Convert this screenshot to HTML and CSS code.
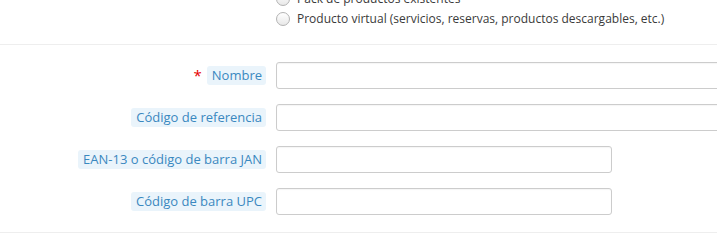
FILE: index.html
```html
<!DOCTYPE html>
<html lang="es">

<head>
    <meta charset="UTF-8" />
    <title>Producto</title>
    <link rel="stylesheet" href="styles.css">
</head>

<body>

    <div class="product-type">
        <label class="radio"><span class="radio-dot"></span>Pack de productos existentes</label>
        <label class="radio"><span class="radio-dot"></span>Producto virtual (servicios, reservas, productos descargables, etc.)</label>
    </div>

    <div class="form-block">
        <div class="form-row">
            <div class="label-col">
                <span class="required">*</span>
                <span class="label-tip">Nombre</span>
            </div>
            <input class="field wide" type="text">
        </div>
        <div class="form-row">
            <div class="label-col">
                <span class="label-tip">Código de referencia</span>
            </div>
            <input class="field wide" type="text">
        </div>
        <div class="form-row">
            <div class="label-col">
                <span class="label-tip">EAN-13 o código de barra JAN</span>
            </div>
            <input class="field" type="text">
        </div>
        <div class="form-row">
            <div class="label-col">
                <span class="label-tip">Código de barra UPC</span>
            </div>
            <input class="field" type="text">
        </div>
    </div>

</body>

</html>
```

FILE: styles.css
```css
body {
    margin: 0;
    background: #ffffff;
    font-family: 'Open Sans', sans-serif;
    font-size: 13px;
    color: #555;
    overflow: hidden;
}

.product-type {
    margin-top: -11px;
    padding-left: 276px;
    padding-bottom: 15px;
    border-bottom: 1px solid #eeeeee;
    font-size: 12px;
    color: #3a3a3a;
}

.radio {
    display: flex;
    align-items: center;
    height: 20px;
    line-height: 20px;
}

.radio-dot {
    width: 12px;
    height: 12px;
    border: 1px solid #b3b3b3;
    border-radius: 50%;
    background: linear-gradient(#ffffff, #e8e8e8);
    margin-right: 7px;
    flex-shrink: 0;
}

.form-block {
    padding: 17px 0 17px;
    border-bottom: 1px solid #eeeeee;
    display: flex;
    flex-direction: column;
    gap: 15px;
}

.form-row {
    display: grid;
    grid-template-columns: 266px auto;
    column-gap: 10px;
    align-items: center;
}

.label-col {
    display: flex;
    justify-content: flex-end;
    align-items: center;
}

.label-tip {
    background: #eaf4fb;
    color: #3a88c0;
    padding: 0 4px 0 5px;
    line-height: 19px;
    border-radius: 3px;
}

.required {
    color: #e60000;
    font-size: 15px;
    margin-right: 5px;
    line-height: 19px;
}

.field {
    box-sizing: border-box;
    height: 27px;
    width: 336px;
    border: 1px solid #cccccc;
    border-radius: 3px;
    box-shadow: inset 0 1px 1px rgba(0, 0, 0, 0.04);
    background: #fff;
    font-family: inherit;
    font-size: 13px;
    padding: 0 6px;
}

.field.wide {
    width: 470px;
}
```
